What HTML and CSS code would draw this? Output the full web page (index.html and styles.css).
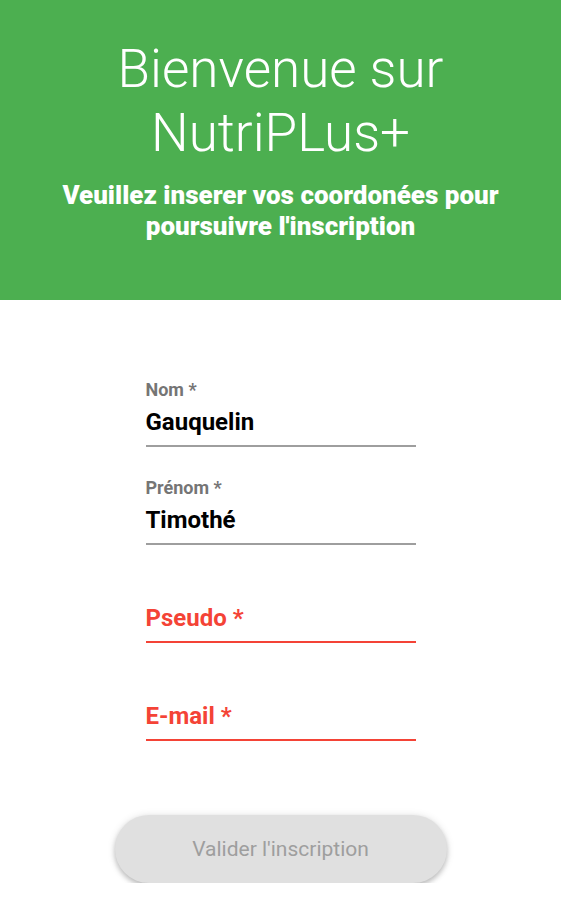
FILE: index.html
```html
<!DOCTYPE html>
<html lang="fr">
<head>
<meta charset="utf-8">
<title>NutriPLus+</title>
<link rel="stylesheet" href="styles.css">
</head>
<body>
<header class="hero">
  <h1 class="hero-title">Bienvenue sur<br>NutriPLus+</h1>
  <p class="hero-sub">Veuillez inserer vos coordonées pour<br>poursuivre l'inscription</p>
</header>
<main class="form">
  <div class="field">
    <div class="label">Nom *</div>
    <div class="value">Gauquelin</div>
  </div>
  <div class="field">
    <div class="label">Prénom *</div>
    <div class="value">Timothé</div>
  </div>
  <div class="field error">
    <div class="label"></div>
    <div class="value placeholder">Pseudo *</div>
  </div>
  <div class="field error">
    <div class="label"></div>
    <div class="value placeholder">E-mail *</div>
  </div>
  <button class="submit" type="button">Valider l'inscription</button>
</main>
</body>
</html>
```
FILE: styles.css
```css
* { box-sizing: border-box; }
html, body { margin: 0; padding: 0; background: #fff; }
body { font-family: Roboto, "Noto Sans", sans-serif; }

.hero {
  height: 300px;
  background: #4caf50;
  color: #fff;
  text-align: center;
  padding-top: 37px;
}
.hero-title {
  margin: 0;
  font-weight: 300;
  font-size: 53px;
  line-height: 64px;
}
.hero-sub {
  margin: 15px 0 0;
  font-weight: 900;
  font-size: 26px;
  line-height: 31px;
  letter-spacing: 0;
}

.form {
  display: flex;
  flex-direction: column;
  align-items: center;
  padding-top: 79px;
  gap: 30px;
}
.field {
  width: 270px;
  border-bottom: 2px solid #9e9e9e;
  padding-bottom: 9px;
}
.label {
  height: 22px;
  font-size: 18px;
  line-height: 22px;
  font-weight: 700;
  color: #757575;
  margin-bottom: 7px;
}
.value {
  height: 28px;
  font-size: 24px;
  line-height: 28px;
  font-weight: 700;
  color: #000;
}
.field.error { border-bottom-color: #f44336; }
.placeholder { color: #f44336; }

.submit {
  margin-top: 44px;
  width: 332px;
  height: 68px;
  border: none;
  border-radius: 34px;
  background: #e0e0e0;
  color: #9e9e9e;
  font-family: Roboto, "Noto Sans", sans-serif;
  font-size: 21px;
  font-weight: 400;
  box-shadow: 0 3px 5px rgba(0,0,0,0.2), 0 1px 8px rgba(0,0,0,0.12);
}
```
